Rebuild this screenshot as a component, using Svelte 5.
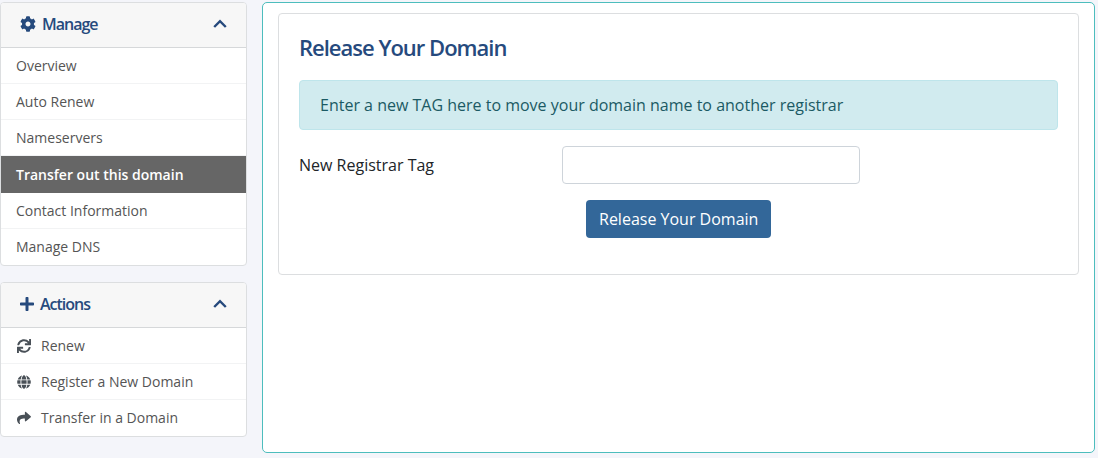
<script lang="ts">
  type Item = { label: string; icon?: string; active?: boolean };
  type Panel = { title: string; icon: string; viewBox: string; items: Item[] };

  const panels: Panel[] = [
    {
      title: 'Manage',
      icon: 'cog',
      viewBox: '0 0 512 512',
      items: [
        { label: 'Overview' },
        { label: 'Auto Renew' },
        { label: 'Nameservers' },
        { label: 'Transfer out this domain', active: true },
        { label: 'Contact Information' },
        { label: 'Manage DNS' },
      ],
    },
    {
      title: 'Actions',
      icon: 'plus',
      viewBox: '0 0 448 512',
      items: [
        { label: 'Renew', icon: 'sync' },
        { label: 'Register a New Domain', icon: 'globe' },
        { label: 'Transfer in a Domain', icon: 'share' },
      ],
    },
  ];

  const paths: Record<string, string> = {
    cog: 'M487.4 315.7l-42.6-24.6c4.3-23.2 4.3-47 0-70.2l42.6-24.6c4.9-2.8 7.1-8.6 5.5-14-11.1-35.6-30-67.8-54.7-94.6-3.8-4.1-10-5.1-14.8-2.3L380.8 110c-17.9-15.4-38.5-27.3-60.8-35.1V25.8c0-5.6-3.9-10.5-9.4-11.7-36.7-8.2-74.3-7.8-109.2 0-5.5 1.200-9.4 6.100-9.4 11.700V75c-22.2 7.900-42.8 19.800-60.8 35.100L88.700 85.500c-4.9-2.8-11-1.9-14.800 2.300-24.700 26.700-43.600 58.900-54.700 94.600-1.700 5.400.6 11.200 5.500 14L67.300 221c-4.300 23.200-4.300 47 0 70.200l-42.600 24.600c-4.900 2.800-7.100 8.600-5.500 14 11.100 35.600 30 67.800 54.700 94.600 3.800 4.100 10 5.100 14.800 2.300l42.600-24.600c17.900 15.400 38.500 27.300 60.800 35.100v49.200c0 5.600 3.900 10.500 9.400 11.700 36.700 8.200 74.300 7.800 109.200 0 5.500-1.200 9.400-6.100 9.400-11.700v-49.200c22.200-7.900 42.800-19.800 60.800-35.100l42.600 24.600c4.900 2.800 11 1.900 14.800-2.300 24.700-26.700 43.600-58.900 54.700-94.600 1.500-5.500-.7-11.300-5.600-14.100zM256 336c-44.100 0-80-35.900-80-80s35.900-80 80-80 80 35.900 80 80-35.900 80-80 80z',
    plus: 'M416 208H272V64c0-17.700-14.300-32-32-32h-32c-17.700 0-32 14.300-32 32v144H32c-17.700 0-32 14.300-32 32v32c0 17.700 14.300 32 32 32h144v144c0 17.700 14.300 32 32 32h32c17.700 0 32-14.300 32-32V304h144c17.700 0 32-14.300 32-32v-32c0-17.700-14.300-32-32-32z',
    sync: 'M440.700 12.600l4 82.800A247.200 247.200 0 0 0 255.800 8C134.700 8 33.900 94.900 12.300 209.800A12 12 0 0 0 24.100 224h49.100a12 12 0 0 0 11.700-9.300 175.900 175.900 0 0 1 317-56.900l-101.500-4.900a12 12 0 0 0-12.600 12v47.400a12 12 0 0 0 12 12H500a12 12 0 0 0 12-12V12a12 12 0 0 0-12-12h-47.400a12 12 0 0 0-11.900 12.600zM255.800 432a175.600 175.600 0 0 1-146-77.800l101.800 4.900a12 12 0 0 0 12.600-12v-47.400a12 12 0 0 0-12-12H12a12 12 0 0 0-12 12V500a12 12 0 0 0 12 12h47.400a12 12 0 0 0 12-12.600l-4.200-82.600A247.200 247.200 0 0 0 255.800 504c121.100 0 221.900-86.900 243.600-201.800a12 12 0 0 0-11.800-14.200h-49.100a12 12 0 0 0-11.700 9.300A175.900 175.900 0 0 1 255.800 432z',
    globe: 'M336.500 160C322 70.700 287.800 8 248 8s-74 62.700-88.500 152h177zM152 256c0 22.200 1.200 43.500 3.300 64h185.300c2.100-20.500 3.300-41.800 3.300-64s-1.200-43.500-3.300-64H155.300c-2.100 20.500-3.300 41.800-3.300 64zm324.700-96c-28.600-67.900-86.500-120.400-158-141.600 24.400 33.800 41.200 84.700 50 141.600h108zM177.200 18.400C105.800 39.600 47.800 92.100 19.300 160h108c8.700-56.900 25.500-107.800 49.900-141.600zM487.400 192H372.700c2.100 21 3.300 42.500 3.300 64s-1.200 43-3.300 64h114.600c5.500-20.500 8.600-41.800 8.600-64s-3.100-43.500-8.500-64zM120 256c0-21.500 1.200-43 3.300-64H8.600C3.200 212.500 0 233.800 0 256s3.200 43.500 8.600 64h114.600c-2-21-3.200-42.500-3.200-64zm39.500 96c14.500 89.300 48.700 152 88.500 152s74-62.700 88.500-152h-177zm159.300 141.600c71.400-21.200 129.400-73.700 158-141.600h-108c-8.800 56.900-25.600 107.800-50 141.600zM19.300 352c28.600 67.900 86.500 120.400 158 141.600-24.400-33.800-41.200-84.700-50-141.600h-108z',
    share: 'M503.700 189.800L327.700 37.900C312.300 24.500 288 35.300 288 56v80.100C127.400 137.900 0 170.100 0 322.300c0 61.400 39.600 122.300 83.300 154.100 13.700 9.900 33.100-2.500 28.100-18.600C66.100 312.800 132.900 274.300 288 272.100V360c0 20.700 24.300 31.500 39.700 18.200l176-152c11.100-9.600 11.100-26.800 0-36.400z',
  };

  let open = $state([true, true]);
  let tag = $state('');
</script>

<div class="page">
  <aside>
    {#each panels as panel, i}
      <section class="panel">
        <button class="panel-head" aria-expanded={open[i]} onclick={() => (open[i] = !open[i])}>
          <svg class="head-icon" viewBox={panel.viewBox} aria-hidden="true">
            <path d={paths[panel.icon]} />
          </svg>
          <span>{panel.title}</span>
          <svg class="chevron" class:closed={!open[i]} viewBox="0 0 14 10" aria-hidden="true">
            <path d="M1.200 8 7 2.200 12.800 8" />
          </svg>
        </button>
        {#if open[i]}
          <nav aria-label={panel.title}>
            {#each panel.items as item}
              <a href="#top" class:active={item.active}>
                {#if item.icon}
                  <svg
                    class="item-icon"
                    viewBox={item.icon === 'globe' ? '-8 0 512 512' : '0 0 512 512'}
                    aria-hidden="true"
                  >
                    <path d={paths[item.icon]} />
                  </svg>
                {/if}
                {item.label}
              </a>
            {/each}
          </nav>
        {/if}
      </section>
    {/each}
  </aside>

  <main>
    <div class="card">
      <h1>Release Your Domain</h1>
      <div class="alert">Enter a new TAG here to move your domain name to another registrar</div>
      <form onsubmit={(e) => e.preventDefault()}>
        <label for="tag">New Registrar Tag</label>
        <input id="tag" type="text" bind:value={tag} />
        <button class="submit" type="submit">Release Your Domain</button>
      </form>
    </div>
  </main>
</div>

<style>
  :global(body) {
    background: #f4f5fa;
  }
  .page {
    box-sizing: border-box;
    display: grid;
    grid-template-columns: 247px minmax(0, 1fr);
    gap: 15px;
    min-height: 100vh;
    padding: 2px 3px 5px 0;
    font-family: 'Open Sans', sans-serif;
    font-size: 16px;
    line-height: 24px;
    color: #212529;
  }
  .page * {
    box-sizing: border-box;
  }
  aside {
    display: flex;
    flex-direction: column;
    gap: 16px;
  }
  .panel {
    overflow: hidden;
    background: #fff;
    border: 1px solid #dcdee0;
    border-radius: 4px;
  }
  .panel-head {
    display: flex;
    align-items: center;
    gap: 6px;
    width: 100%;
    height: 45px;
    padding: 0 19px 2px;
    border: none;
    border-bottom: 1px solid #d6d8da;
    background: #f7f7f7;
    color: #264a7d;
    font: inherit;
    font-weight: 600;
    letter-spacing: -1px;
    cursor: pointer;
  }
  .head-icon {
    height: 16px;
    fill: currentColor;
  }
  .chevron {
    width: 14px;
    height: 10px;
    margin-left: auto;
    fill: none;
    stroke: currentColor;
    stroke-width: 2.4;
  }
  .chevron.closed {
    transform: rotate(180deg);
  }
  nav a {
    display: flex;
    align-items: center;
    gap: 9px;
    height: 36px;
    padding: 0 15px;
    border-bottom: 1px solid #f2f3f4;
    color: #555;
    font-size: 14px;
    text-decoration: none;
  }
  nav a:last-child {
    border-bottom: none;
  }
  nav a.active {
    height: 37px;
    border: none;
    background: #666;
    color: #fff;
    font-weight: 600;
  }
  .item-icon {
    width: 16px;
    height: 14px;
    fill: #495057;
  }
  main {
    padding: 10px 15px;
    background: #fff;
    border: 1px solid #4dbdbd;
    border-radius: 5px;
  }
  .card {
    padding: 19px 20px 36px;
    border: 1px solid #dcdee0;
    border-radius: 4px;
  }
  h1 {
    margin: 0 0 19px;
    color: #264a7d;
    font-size: 22px;
    font-weight: 600;
    line-height: 28px;
    letter-spacing: -1px;
  }
  .alert {
    padding: 12px 20px;
    background: #d1ebef;
    border: 1px solid #bee5eb;
    border-radius: 4px;
    color: #1b5a64;
  }
  form {
    display: grid;
    grid-template-columns: 263px minmax(0, 298px);
    row-gap: 16px;
    align-items: center;
    margin-top: 16px;
  }
  input {
    width: 100%;
    height: 38px;
    padding: 6px 12px;
    border: 1px solid #ced4da;
    border-radius: 4px;
    background: #fff;
    font: inherit;
  }
  .submit {
    grid-column: 2;
    justify-self: start;
    height: 38px;
    margin-left: 24px;
    padding: 0 13px;
    border: none;
    border-radius: 4px;
    background: #336799;
    color: #fff;
    font: inherit;
    cursor: pointer;
  }
</style>
